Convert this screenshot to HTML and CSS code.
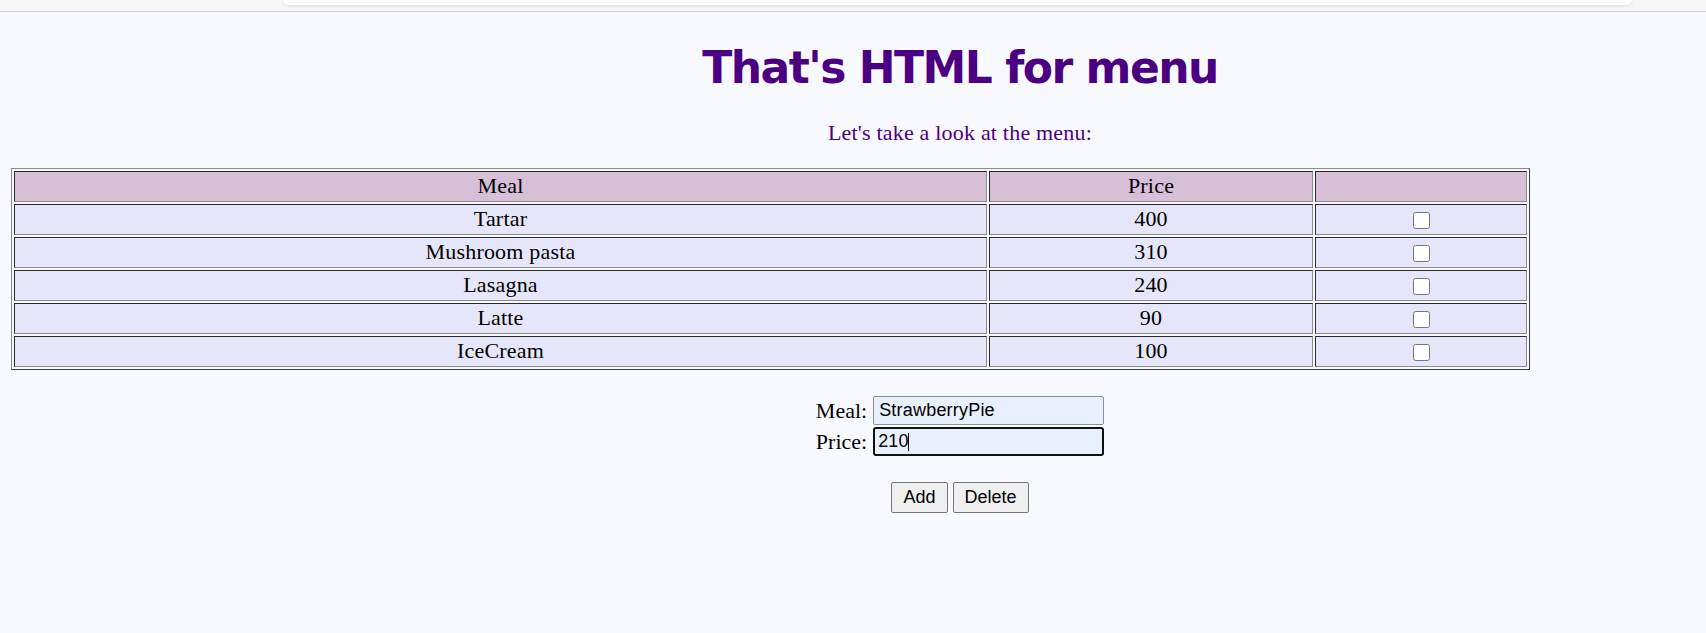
FILE: index.html
```html
<!DOCTYPE html>
<html lang="en">
<head>
<meta charset="utf-8">
<title>Menu</title>
<link rel="stylesheet" href="styles.css">
</head>
<body>
<div class="topbar"><div class="tab"></div></div>
<main class="page">
  <header class="head">
    <h1 class="title">That's HTML for menu</h1>
    <p class="lead">Let's take a look at the menu:</p>
  </header>
  <table class="menu">
    <colgroup><col class="c-meal"><col class="c-price"><col class="c-check"></colgroup>
    <thead>
      <tr><th>Meal</th><th>Price</th><th></th></tr>
    </thead>
    <tbody>
      <tr><td>Tartar</td><td>400</td><td><input type="checkbox" class="check"></td></tr>
      <tr><td>Mushroom pasta</td><td>310</td><td><input type="checkbox" class="check"></td></tr>
      <tr><td>Lasagna</td><td>240</td><td><input type="checkbox" class="check"></td></tr>
      <tr><td>Latte</td><td>90</td><td><input type="checkbox" class="check"></td></tr>
      <tr><td>IceCream</td><td>100</td><td><input type="checkbox" class="check"></td></tr>
    </tbody>
  </table>
  <form class="add-form">
    <div class="fields">
      <label class="lbl" for="meal">Meal:</label>
      <input id="meal" class="field" type="text" value="StrawberryPie">
      <label class="lbl" for="price">Price:</label>
      <span class="field-wrap"><input id="price" class="field field-focus" type="text" value="210"><span class="caret"></span></span>
    </div>
    <div class="buttons">
      <button type="button" class="btn">Add</button>
      <button type="button" class="btn">Delete</button>
    </div>
  </form>
</main>
</body>
</html>
```
FILE: styles.css
```css
html, body {
  margin: 0;
  padding: 0;
  background: #f8f8ff;
  overflow: hidden;
}
body {
  font-family: "Liberation Serif", "Times New Roman", serif;
  font-size: 22px;
  color: #000;
  height: 633px;
}
.topbar {
  box-sizing: border-box;
  height: 12px;
  background: #f6f6f6;
  border-bottom: 1px solid #d2d2d2;
}
.tab {
  margin-left: 283px;
  width: 1349px;
  height: 5px;
  background: #fff;
  border-radius: 0 0 7px 7px;
  box-shadow: 0 1px 3px rgba(0,0,0,0.10);
}
.page {
  padding: 0 0 0 11px;
}
.head {
  padding-left: 203px;
  text-align: center;
}
.title {
  margin: 30px 0 0;
  font-family: "DejaVu Sans", Verdana, sans-serif;
  font-weight: bold;
  font-size: 44px;
  letter-spacing: -1.5px;
  line-height: 52px;
  color: #4b0082;
}
.lead {
  margin: 26px 0 0;
  font-size: 22px;
  letter-spacing: 0.2px;
  line-height: 25px;
  color: #4b0082;
}
.menu {
  margin-top: 23px;
  table-layout: fixed;
  width: 1519px;
  border-collapse: separate;
  border-spacing: 2px;
  border: 1px solid;
  border-color: #8a8a8a #3c3c3c #3c3c3c #8a8a8a;
}
.c-meal { width: 973px; }
.c-price { width: 324px; }
.c-check { width: 212px; }
.menu th, .menu td {
  font-weight: normal;
  text-align: center;
  padding: 1px 1px 3px;
  line-height: 25px;
  height: 25px;
  letter-spacing: 0.2px;
  border: 1px solid;
  border-color: #2a2a2a #8a8a8a #8a8a8a #2a2a2a;
  background: #e6e6fa;
}
.menu th {
  background: #d8bfd8;
}
.check {
  width: 17px;
  height: 17px;
  margin: 0;
  vertical-align: middle;
}
.add-form {
  margin-top: 26px;
  padding-left: 203px;
  display: flex;
  flex-direction: column;
  align-items: center;
}
.fields {
  display: grid;
  grid-template-columns: auto 231px;
  column-gap: 6px;
  row-gap: 2px;
  align-items: center;
}
.lbl {
  line-height: 25px;
}
.field-wrap {
  position: relative;
  display: block;
}
.field {
  display: block;
  box-sizing: border-box;
  width: 231px;
  height: 29px;
  margin: 0;
  padding: 0 5px;
  font-family: "Liberation Sans", Arial, sans-serif;
  font-size: 18px;
  letter-spacing: 0.2px;
  color: #000;
  background: #e8f0fe;
  border: 1px solid #8f8f8f;
  border-radius: 2px;
  outline: none;
}
.field-focus {
  border: 2px solid #101010;
  border-radius: 3px;
  padding-left: 3px;
}
.caret {
  position: absolute;
  left: 35px;
  top: 6px;
  width: 1px;
  height: 18px;
  background: #000;
}
.buttons {
  margin-top: 26px;
  display: flex;
  gap: 5px;
}
.btn {
  box-sizing: border-box;
  height: 31px;
  padding: 0 11px;
  font-family: "Liberation Sans", Arial, sans-serif;
  font-size: 18px;
  color: #000;
  background: #efefef;
  border: 1px solid #767676;
  border-radius: 2px;
}
```
